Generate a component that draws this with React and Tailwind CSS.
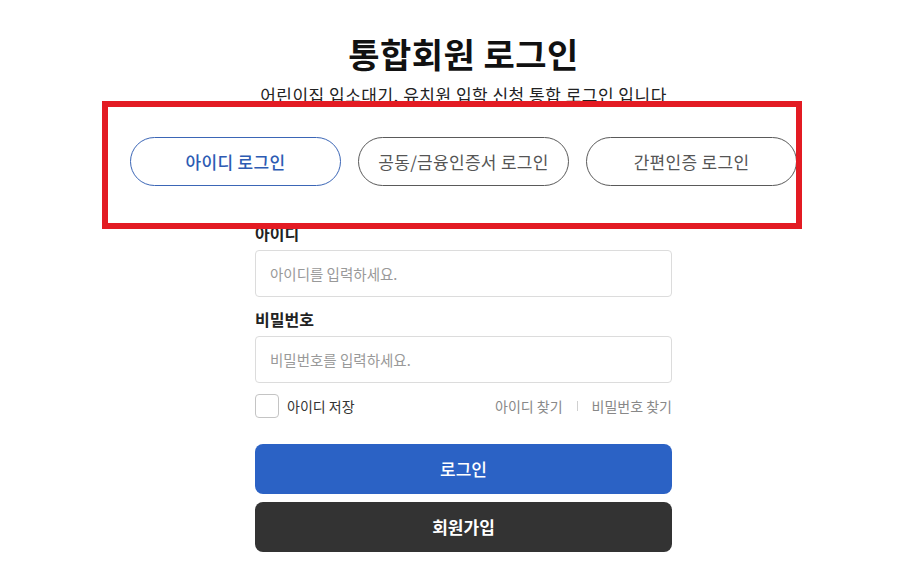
import React, { useState } from 'react';

const tabs = ['아이디 로그인', '공동/금융인증서 로그인', '간편인증 로그인'];

const App = () => {
    const [tab, setTab] = useState(0);
    const [saveId, setSaveId] = useState(false);

    return (
        <div className="relative min-h-screen bg-white text-[#222] font-['Noto_Sans_CJK_KR',sans-serif]">
            <div className="pl-[130px]">
                <div className="w-[667px] flex flex-col items-center pt-[34px]">
                    <h1 className="text-[34px] leading-[40px] font-bold tracking-[0.5px] text-[#111]">통합회원 로그인</h1>
                    <p className="mt-[9px] text-[17px] leading-[24px] tracking-[0.5px] text-[#222]">어린이집 입소대기, 유치원 입학 신청 통합 로그인 입니다</p>

                    <div className="mt-[30px] flex gap-[17px]">
                        {tabs.map((t, i) => (
                            <button
                                key={t}
                                onClick={() => setTab(i)}
                                className={
                                    tab === i
                                        ? 'w-[211px] h-[49px] rounded-full border border-[#3b66b6] text-[17px] tracking-[0.3px] font-medium text-[#2d5bb3]'
                                        : 'w-[211px] h-[49px] rounded-full border border-[#5a5a5a] text-[17px] tracking-[0.3px] text-[#555]'
                                }
                            >
                                {t}
                            </button>
                        ))}
                    </div>

                    <form className="w-[417px] mt-[35px] flex flex-col" onSubmit={e => e.preventDefault()}>
                        <label className="text-[16px] leading-[24px] font-bold text-[#222]">아이디</label>
                        <input
                            placeholder="아이디를 입력하세요."
                            className="mt-[5px] h-[47px] px-[14px] rounded-[4px] border border-[#dcdcdc] text-[14.5px] outline-none placeholder:text-[#999]"
                        />
                        <label className="mt-[10px] text-[16px] leading-[24px] font-bold text-[#222]">비밀번호</label>
                        <input
                            type="password"
                            placeholder="비밀번호를 입력하세요."
                            className="mt-[5px] h-[47px] px-[14px] rounded-[4px] border border-[#dcdcdc] text-[14.5px] outline-none placeholder:text-[#999]"
                        />

                        <div className="mt-[11px] h-[24px] flex items-center justify-between">
                            <label className="flex items-center gap-[8px] cursor-pointer">
                                <span
                                    onClick={() => setSaveId(!saveId)}
                                    className={saveId ? 'w-[24px] h-[24px] rounded-[4px] border border-[#2b62c5] bg-[#2b62c5]' : 'w-[24px] h-[24px] rounded-[4px] border border-[#c4c4c4] bg-white'}
                                />
                                <span className="text-[14px] text-[#333]">아이디 저장</span>
                            </label>
                            <div className="flex items-center text-[14px] text-[#888]">
                                <a>아이디 찾기</a>
                                <span className="mx-[14px] w-px h-[10px] bg-[#d0d0d0]" />
                                <a>비밀번호 찾기</a>
                            </div>
                        </div>

                        <button type="submit" className="mt-[26px] h-[50px] rounded-[8px] bg-[#2b62c5] text-white text-[17px] font-medium">로그인</button>
                        <button type="button" className="mt-[8px] h-[50px] rounded-[8px] bg-[#333333] text-white text-[17px] font-semibold">회원가입</button>
                    </form>
                </div>
            </div>

            <div className="absolute left-[102px] top-[101px] w-[700px] h-[128px] border-[6px] border-[#e31b23] pointer-events-none" />
        </div>
    );
};

export default App;
